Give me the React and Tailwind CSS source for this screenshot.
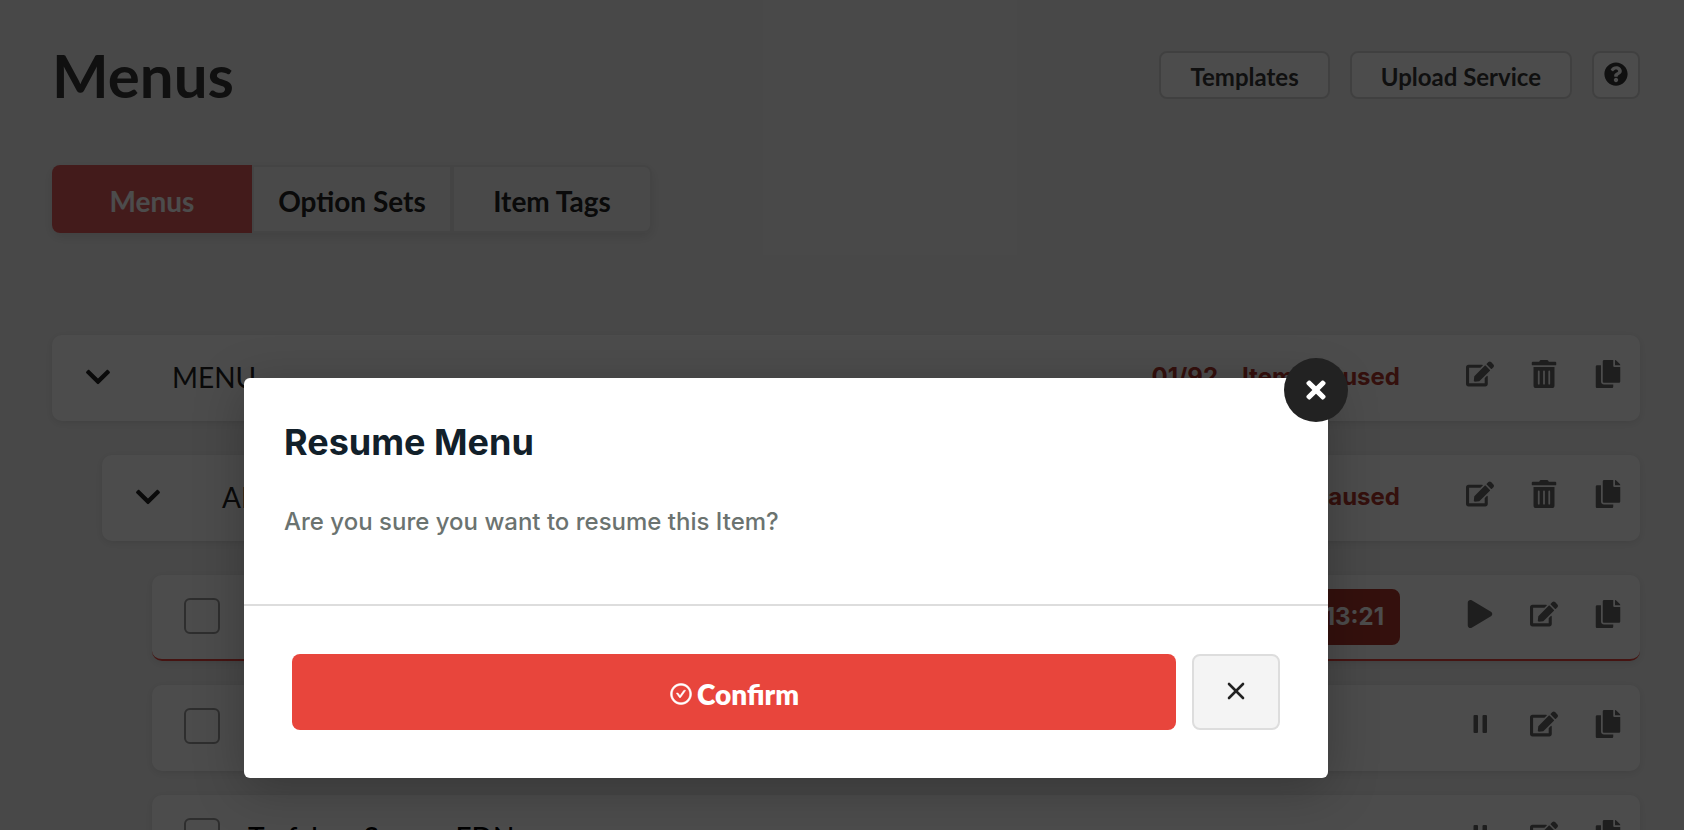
import { FaChevronDown, FaCopy, FaEdit, FaPlay, FaQuestionCircle, FaTimes, FaTrashAlt } from "react-icons/fa";
import { AiOutlineCheckCircle } from "react-icons/ai";
import { X } from "lucide-react";

function PauseIcon() {
  return (
    <svg viewBox="0 0 28 28" className="size-7" fill="currentColor" aria-hidden="true">
      <rect x="7.5" y="5" width="4.5" height="18" rx="1" />
      <rect x="16.5" y="5" width="4.5" height="18" rx="1" />
    </svg>
  );
}

function Actions({ children }) {
  return <div className="flex w-[156px] shrink-0 items-center justify-between pb-1.5 text-[28px] text-[#666]">{children}</div>;
}

function IconButton({ label, children }) {
  return (
    <button type="button" aria-label={label} className="flex size-7 items-center justify-center">
      {children}
    </button>
  );
}

const row = "flex h-[86px] items-center rounded-[10px] bg-white pr-[18px] pl-8 shadow-[0_2px_10px_rgba(0,0,0,0.1)]";

function GroupRow({ name, count, indent }) {
  return (
    <section className={`${row} ${indent} pb-0.5`}>
      <button type="button" aria-label={`Collapse ${name}`} className="mr-[60px] text-[28px] text-[#222]">
        <FaChevronDown />
      </button>
      <h2 className="flex-1 text-[28px] text-[#222]">{name}</h2>
      <p className="mr-[66px] flex gap-6 font-['Inter',sans-serif] text-2xl font-bold text-[#b0362c]">
        <span>{count}</span>
        <span>Items Paused</span>
      </p>
      <Actions>
        <IconButton label="Edit"><FaEdit /></IconButton>
        <IconButton label="Delete"><FaTrashAlt /></IconButton>
        <IconButton label="Copy"><FaCopy /></IconButton>
      </Actions>
    </section>
  );
}

function ItemRow({ name, paused }) {
  return (
    <section className={`${row} ${paused ? "border-b-2 border-[#e8453c]" : "pb-0.5"}`}>
      <input type="checkbox" aria-label={name} className="mr-7 mb-0.5 size-9 shrink-0 appearance-none rounded-md border-2 border-[#999]" />
      <h3 className="flex-1 text-[28px] font-medium text-black">{name}</h3>
      {paused && (
        <span className="mr-[66px] rounded-lg bg-[#b0362c] px-4 py-3 font-['Inter',sans-serif] text-2xl leading-8 font-bold text-white">
          00:13:21
        </span>
      )}
      <Actions>
        <IconButton label={paused ? "Resume" : "Pause"}>{paused ? <FaPlay /> : <PauseIcon />}</IconButton>
        <IconButton label="Edit"><FaEdit /></IconButton>
        <IconButton label="Copy"><FaCopy /></IconButton>
      </Actions>
    </section>
  );
}

const outlined = "flex h-12 items-center justify-center rounded-lg border-2 border-[#d8d8d8] bg-white text-[#383838]";
const tab = "flex w-[200px] items-center justify-center border-2 border-[#e4e4e4] pt-1";

export default function App() {
  return (
    <div className="relative h-screen overflow-hidden bg-[#f2f2f2] font-['Lato',sans-serif]">
      <main className="pt-[42px] pr-11 pl-[52px]">
        <header className="flex items-center justify-between">
          <h1 className="text-[60px] leading-[66px] font-bold text-[#383838]">Menus</h1>
          <div className="flex gap-5 text-2xl font-bold">
            <button type="button" className={`${outlined} px-[29px] pt-1`}>Templates</button>
            <button type="button" className={`${outlined} px-[29px] pt-1`}>Upload Service</button>
            <button type="button" aria-label="Help" className={`${outlined} w-12 pb-0.5`}><FaQuestionCircle /></button>
          </div>
        </header>

        <nav className="mt-[57px] flex h-[68px] w-fit rounded-lg bg-[#f4f4f4] text-[28px] font-bold text-[#222] shadow-[0_4px_12px_rgba(0,0,0,0.1)]">
          <button type="button" className="w-[200px] rounded-l-lg bg-[#df5d5d] pt-1 text-white">Menus</button>
          <button type="button" className={tab}>Option Sets</button>
          <button type="button" className={`${tab} rounded-r-lg`}>Item Tags</button>
        </nav>

        <div className="mt-[102px] flex flex-col gap-[34px]">
          <GroupRow name="MENU" count="01/92" indent="" />
          <GroupRow name="APPETIZERS" count="01/12" indent="ml-[50px]" />
          <div className="ml-[100px] flex flex-col gap-6">
            <ItemRow name="Edamame" paused />
            <ItemRow name="Spring Rolls" />
            <ItemRow name="Torfahan Sauces EDN" />
          </div>
        </div>
      </main>

      <div className="absolute inset-0 flex items-start justify-center bg-black/70 pt-[378px]">
        <div role="dialog" aria-modal="true" aria-labelledby="dialog-title" className="relative mr-28 w-[1084px] rounded-md bg-white shadow-[0_10px_50px_rgba(0,0,0,0.25)]">
          <button type="button" aria-label="Close" className="absolute -top-5 -right-5 flex size-16 items-center justify-center rounded-full bg-[#222] text-[28px] text-white">
            <FaTimes />
          </button>
          <div className="h-[228px] border-b-2 border-[#ddd] px-10 pt-10 font-['Inter',sans-serif]">
            <h2 id="dialog-title" className="text-4xl leading-[48px] font-bold text-[#12202a]">Resume Menu</h2>
            <p className="mt-9 text-2xl leading-10 font-medium text-[#6b7370]">Are you sure you want to resume this Item?</p>
          </div>
          <div className="flex gap-4 p-12">
            <button type="button" className="flex h-[76px] flex-1 items-center justify-center gap-1 rounded-lg bg-[#e8453c] pt-1 text-[28px] font-extrabold text-white">
              <AiOutlineCheckCircle className="size-6 stroke-white" strokeWidth="24" />
              Confirm
            </button>
            <button type="button" aria-label="Cancel" className="flex h-[76px] w-[88px] items-center justify-center rounded-lg border-2 border-[#ddd] bg-[#f4f4f4] pb-0.5 text-[#222]">
              <X size={28} strokeWidth={2.25} />
            </button>
          </div>
        </div>
      </div>
    </div>
  );
}
